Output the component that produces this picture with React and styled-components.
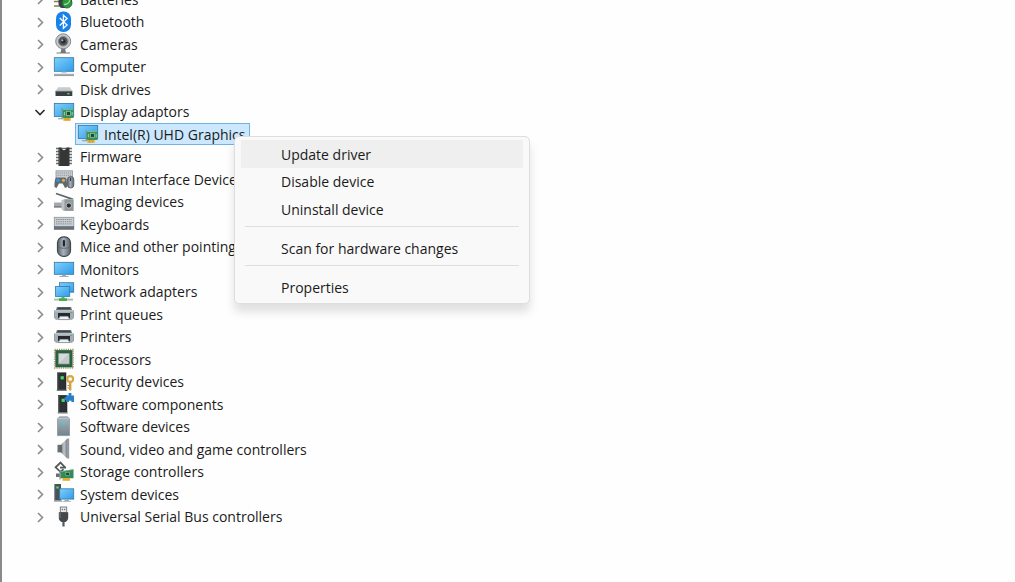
import React, { useState } from 'react';
import styled, { createGlobalStyle, css } from 'styled-components';

const GlobalStyle = createGlobalStyle`
  * {
    box-sizing: border-box;
  }
  body {
    margin: 0;
    background: #fefefe;
    color: #1b1b1b;
    font-family: 'Open Sans', 'Noto Sans', sans-serif;
    font-size: 14px;
  }
`;

const Window = styled.main`
  min-height: 100vh;
  overflow: hidden;
  border-left: 2px solid #8a8a8a;
`;

/* scrolled half a row down, so the first line is cut at the top */
const Tree = styled.ul`
  display: grid;
  grid-auto-rows: 22px 23px;
  margin: -12px 0 0;
  padding: 0 0 0 30px;
  list-style: none;
`;

const Row = styled.li`
  display: flex;
  align-items: center;
  justify-content: flex-start;
  position: relative;
  padding-left: ${({ $child }) => ($child ? '43px' : '0')};
`;

const Toggle = styled.button`
  display: flex;
  align-items: center;
  justify-content: center;
  width: 16px;
  height: 16px;
  margin-right: 5px;
  padding: 0;
  border: 0;
  background: none;
  color: ${({ $open }) => ($open ? '#2b2b2b' : '#8c8c8c')};
`;

const Item = styled.span`
  display: flex;
  align-items: center;
  gap: 5px;
  height: 100%;
  white-space: nowrap;
  ${({ $selected }) => $selected && css`
    padding: 0 4px 0 1px;
    border: 1px solid #70b4e4;
    background: #cce8ff;
  `}
`;

const Picture = styled.svg`
  display: block;
  flex: none;
  width: 22px;
  height: 22px;
`;

const Hidden = styled.svg`
  position: absolute;
  width: 0;
  height: 0;
`;

const Menu = styled.div`
  position: absolute;
  z-index: 1;
  top: 13px;
  left: 202px;
  width: 296px;
  padding: 3px 6px 2px;
  border: 1px solid #dedede;
  border-radius: 5px;
  background: #f9f9f9;
  box-shadow: 0 8px 10px rgba(0, 0, 0, 0.12);
`;

const MenuGroup = styled.div`
  display: grid;
  grid-auto-rows: 28px 27px;
`;

const MenuItem = styled.button`
  padding: 0 40px;
  border: 0;
  background: ${({ $active }) => ($active ? '#efefef' : 'transparent')};
  color: inherit;
  font: inherit;
  text-align: left;
`;

const Separator = styled.hr`
  height: 1px;
  margin: 3px 4px 7px;
  border: 0;
  background: #dfdfdf;
`;

const Defs = () => (
  <Hidden aria-hidden="true">
    <defs>
      <linearGradient id="screen" x1="0" y1="0" x2="1" y2="1">
        <stop offset="0" stopColor="#7fd0fb" />
        <stop offset="1" stopColor="#2e9be8" />
      </linearGradient>
      <linearGradient id="metal" x1="0" y1="0" x2="1" y2="0">
        <stop offset="0" stopColor="#6f757a" />
        <stop offset="0.5" stopColor="#c3c8cc" />
        <stop offset="1" stopColor="#7f868c" />
      </linearGradient>
      <linearGradient id="steel" x1="0" y1="0" x2="0" y2="1">
        <stop offset="0" stopColor="#a9b6bf" />
        <stop offset="1" stopColor="#74828c" />
      </linearGradient>
      <linearGradient id="mouse" x1="0" y1="0" x2="1" y2="0">
        <stop offset="0" stopColor="#59616b" />
        <stop offset="0.45" stopColor="#a9b1bb" />
        <stop offset="1" stopColor="#5c646e" />
      </linearGradient>
    </defs>
  </Hidden>
);

const Screen = ({
  x, y, w, h,
}) => (
  <rect x={x} y={y} width={w} height={h} fill="url(#screen)" stroke="#3277a8" strokeWidth="0.8" />
);

const Card = ({ x, y }) => (
  <g transform={`translate(${x} ${y})`}>
    <path d="M-1 -1v11" stroke="#7f9aa8" strokeWidth="1" />
    <rect x="-0.5" y="0" width="11" height="9" fill="#3c8f5b" />
    <path d="M0 0.6h10" stroke="#8ccb9e" strokeWidth="0.8" />
    <rect x="3.6" y="2.6" width="3.8" height="3.8" fill="#1d4a31" stroke="#93cfa4" strokeWidth="0.7" />
    <path d="M1.4 3v3.4M9.2 3v3.4" stroke="#a8d8ae" strokeWidth="0.9" />
    <rect x="0.3" y="9" width="7.4" height="2.8" fill="#e2b02d" />
    <path d="M2.6 9v2.8M5 9v2.8" stroke="#b98c22" strokeWidth="0.4" />
  </g>
);

const Tower = ({ x, y }) => (
  <g transform={`translate(${x} ${y})`}>
    <rect x="0.5" y="0" width="8.5" height="17" fill="#2d3135" stroke="#1b1e20" strokeWidth="0.5" />
    <path d="M0.8 0.3v16.4" stroke="#656b70" strokeWidth="0.8" />
    <rect x="3.6" y="3.4" width="3.2" height="3.2" fill="#46df5b" />
    <path d="M-0.3 17.6h10" stroke="#777d82" strokeWidth="1.2" />
  </g>
);

const printer = (
  <>
    <path d="M4 4h14l1.4 4H2.6z" fill="#6b757b" />
    <path d="M5 4.6h12l0.6 1.6H4.4z" fill="#3f484d" />
    <path d="M1.5 7.5h19v7.5l-1.5 1.3H3L1.5 15z" fill="#a4aeb5" stroke="#737e85" strokeWidth="0.6" />
    <path d="M1.5 7.8h19" stroke="#dde3e6" strokeWidth="0.9" />
    <rect x="17" y="8.8" width="2.2" height="1.2" fill="#45bd62" />
    <path d="M5 10h12v5H5z" fill="#23292d" />
    <path d="M6.8 13.2h8.4l1.3 3.4H5.5z" fill="#eef1f3" stroke="#5b656b" strokeWidth="0.5" />
  </>
);

const icons = {
  battery: (
    <>
      <path d="M1 13.5h5M1 18h5" stroke="#8a7c4d" strokeWidth="1.4" />
      <path d="M5.5 11h7v9h-3c-2.6 0-4-2-4-4.5z" fill="#3b4043" />
      <path d="M13 8h6v6h-6z" fill="#34393b" />
      <circle cx="14" cy="15" r="5" fill="#2d9742" stroke="#235c30" strokeWidth="0.8" />
      <path d="M11 16.5c3 0 5-1.5 6-4.5" fill="none" stroke="#95dc8c" strokeWidth="1.3" />
    </>
  ),
  bluetooth: (
    <>
      <rect x="3" y="0.5" width="15" height="20.5" rx="7.2" fill="#1682ea" />
      <path d="M6.7 7l7.4 7-3.7 3.3V4.2l3.7 3.3-7.4 7" fill="none" stroke="#fff" strokeWidth="1.3" />
    </>
  ),
  camera: (
    <>
      <path d="M3.5 20h13.5" stroke="#8b8f92" strokeWidth="1.2" />
      <path d="M8.5 15h3.5l1 5H7.500z" fill="#74787b" />
      <circle cx="10.2" cy="8.3" r="7.5" fill="#c5c7c9" stroke="#85898c" strokeWidth="1" />
      <circle cx="10.2" cy="8.3" r="4.8" fill="#4f5559" stroke="#8b8f92" strokeWidth="1" />
      <circle cx="10.2" cy="8.3" r="2.2" fill="#23292f" />
      <circle cx="9.3" cy="7.3" r="1.1" fill="#9fb9cb" />
    </>
  ),
  computer: (
    <>
      <Screen x={1.3} y={1.7} w={19.4} h={13.6} />
      <path d="M8.5 15.8h5v1.4h-5z" fill="#c3ccd2" />
      <path d="M1 18.8h20" stroke="#a2adb6" strokeWidth="2" />
      <path d="M1 19.6h20" stroke="#6f7b84" strokeWidth="0.5" />
    </>
  ),
  disk: (
    <>
      <path d="M5 9.3h12l2.3 4H2.5z" fill="#c8cacb" />
      <rect x="2.5" y="13" width="16.8" height="5" rx="0.5" fill="#3b3e40" />
      <path d="M2.5 13.3h16.8" stroke="#83878a" strokeWidth="0.8" />
      <rect x="14.3" y="15" width="2.2" height="1.4" fill="#4ddb5f" />
    </>
  ),
  display: (
    <>
      <Screen x={1.3} y={2.5} w={19.4} h={13} />
      <path d="M5 17.7h5" stroke="#9aa6ad" strokeWidth="1.2" />
      <Card x={10} y={8} />
    </>
  ),
  firmware: (
    <>
      <path d="M3 2.5h16M3 5.5h16M3 8.500h16M3 11.500h16M3 14.500h16M3 17.500h16" stroke="#6a6c6e" strokeWidth="1.7" />
      <path d="M5.500 1.5h3c0.300 1.8 1.200 2.700 2.500 2.700s2.200-0.900 2.500-2.700h3v18.500h-11z" fill="#343638" />
      <path d="M6.300 2.500v17" stroke="#5c5f61" strokeWidth="0.800" />
    </>
  ),
  hid: (
    <>
      <rect x="3" y="2.8" width="16.5" height="9" fill="#c9ced2" stroke="#8d959b" strokeWidth="0.8" />
      <path d="M4.5 5h13.5M4.5 7.3h13.5" stroke="#848c92" strokeWidth="0.9" strokeDasharray="1.2 0.9" />
      <path d="M3.6 9.5h8.4c1.5 0 2.2 4 2.2 9.500l-2.200 1-2.300-4.500H6L3.500 20l-2-1c0-5.500 0.500-9.500 2.100-9.500z" fill="#5d686f" />
      <circle cx="5" cy="12.3" r="1.8" fill="#3c91d2" />
      <circle cx="10.5" cy="12.3" r="1.6" fill="#e3ac43" />
      <rect x="14.5" y="8.5" width="6.3" height="11.5" rx="3" fill="url(#mouse)" stroke="#454c54" strokeWidth="0.7" />
      <path d="M17.6 9.5v3.5" stroke="#2e343a" strokeWidth="1" />
    </>
  ),
  imaging: (
    <>
      <path d="M3 2.5L20 8.3" stroke="#636769" strokeWidth="1.8" />
      <path d="M1 11.5h10v4.5H1z" fill="#a4a8ab" />
      <path d="M1 16h10" stroke="#686c6f" strokeWidth="1.2" />
      <path d="M8.5 9.3l3-1.3h9v12h-10l-2-2z" fill="#bfc3c5" />
      <path d="M11.5 8.5h9v11.3h-9z" fill="#92979a" />
      <circle cx="15.8" cy="14.5" r="2.6" fill="#282d30" stroke="#d6d9da" strokeWidth="0.8" />
      <rect x="18" y="10" width="1.4" height="1.2" fill="#60d16a" />
    </>
  ),
  keyboard: (
    <>
      <rect x="1.3" y="4.3" width="19.5" height="12" fill="#cbd0d4" stroke="#8b9196" strokeWidth="0.8" />
      <path d="M3 6.5h16M3 8.7h16M3 10.9h16" stroke="#858c92" strokeWidth="1" strokeDasharray="1.4 0.8" />
      <rect x="1" y="13.2" width="20" height="3.3" fill="#686f75" />
    </>
  ),
  mouse: (
    <>
      <rect x="4.5" y="0.8" width="13" height="19.6" rx="6" fill="url(#mouse)" stroke="#40474f" strokeWidth="1.2" />
      <path d="M5 11c2 1.7 10 1.7 12 0" fill="none" stroke="#59616a" strokeWidth="0.8" />
      <rect x="9.8" y="4" width="2.2" height="6.6" rx="1" fill="#20262d" />
    </>
  ),
  monitor: (
    <>
      <Screen x={1.3} y={4.3} w={19.4} h={12} />
      <path d="M9 16.7h4v1.3h2.5v0.9h-9V18H9z" fill="#9eacb6" />
    </>
  ),
  network: (
    <>
      <Screen x={6.5} y={1.7} w={14.2} h={9.5} />
      <Screen x={2.5} y={5.6} w={14.2} h={9.8} />
      <path d="M8.5 15.8h3v2h-3z" fill="#55b968" />
      <path d="M1 18.6h19" stroke="#a7c5ac" strokeWidth="2" />
      <path d="M6 18.6h8" stroke="#39ad4e" strokeWidth="2.6" />
    </>
  ),
  printer,
  processor: (
    <>
      <rect x="1.6" y="1.4" width="18.6" height="18.6" fill="none" stroke="#a79a56" strokeWidth="1.4" strokeDasharray="1.2 1" />
      <rect x="2.3" y="2.1" width="17.2" height="17.2" fill="#2b6044" />
      <rect x="5.7" y="5.5" width="10.4" height="10.4" fill="#d4dbd8" stroke="#9ba9a2" strokeWidth="0.8" />
      <path d="M6.5 15l8.5-8.5v8.5z" fill="#c2cbc7" />
    </>
  ),
  security: (
    <>
      <Tower x={4} y={1.8} />
      <path d="M16 10.5h2.4v8.3l-1.2 1.2-1.2-1.2z" fill="#d3a13f" />
      <path d="M16 14.5h-1.5M16 17h-1.5" stroke="#b98629" strokeWidth="1.2" />
      <circle cx="17.2" cy="8" r="2.9" fill="none" stroke="#daa63f" strokeWidth="2.1" />
    </>
  ),
  component: (
    <>
      <Tower x={5} y={2.3} />
      <path d="M13 2.5h2.600V0h2.800v2.500H21v6.500h-2.600V7.800h-2.400v1.200H13V7h-1.500V4.300H13z" fill="#2b7fc9" />
    </>
  ),
  software: (
    <>
      <path d="M6.5 0.8h8l2 1.8v17h-12v-17z" fill="url(#steel)" stroke="#77848d" strokeWidth="0.6" />
      <path d="M4.5 2.6h12" stroke="#c2ccd3" strokeWidth="0.8" />
      <rect x="9.2" y="6" width="2.8" height="2.6" fill="#3fd2cd" />
    </>
  ),
  sound: (
    <>
      <path d="M4.5 6.8h4v7.6h-4z" fill="#686d71" />
      <path d="M8 6.8L14 0.8v19.4L8 14.4z" fill="url(#metal)" />
      <path d="M14 0.5h2.2v20H14z" fill="#969b9f" />
      <path d="M8 7v7.2" stroke="#4e5357" strokeWidth="0.8" />
    </>
  ),
  storage: (
    <>
      <path d="M12 6.300L7.500 1.600 2.600 6.300l4.900 4.600 3-2.600" fill="none" stroke="#55595b" strokeWidth="1.8" />
      <path d="M7 6.6h6" stroke="#55595b" strokeWidth="1.8" />
      <path d="M3 12.500h4v3.500H3z" fill="#6a6f71" />
      <path d="M7 9.500v9" stroke="#8b9194" strokeWidth="1.2" />
      <path d="M7.500 10.500l13-2.300v9h-13z" fill="#37885a" />
      <path d="M7.500 10.800l13-2.300" stroke="#7dbd90" strokeWidth="0.8" />
      <rect x="12.800" y="11.500" width="3.600" height="3" fill="#1d4a31" stroke="#8bc99d" strokeWidth="0.6" />
      <path d="M9.500 17h7.500v2.800H9.500z" fill="#e0af2e" />
    </>
  ),
  system: (
    <>
      <rect x="1.5" y="1" width="6.5" height="16.5" fill="#4a5257" />
      <path d="M1.8 1v16.5" stroke="#767d82" strokeWidth="0.7" />
      <rect x="3.2" y="3.5" width="2.6" height="2" fill="#4fdc62" />
      <path d="M1 18h8" stroke="#878e93" strokeWidth="1.2" />
      <Screen x={6.7} y={5.8} w={14} h={10.3} />
      <path d="M11.5 16.6h4.5v1.3h2v0.8H9.5v-0.8h2z" fill="#9daab3" />
    </>
  ),
  usb: (
    <>
      <rect x="7.3" y="1" width="6.4" height="5.5" fill="#e4e6e7" stroke="#737679" strokeWidth="0.9" />
      <path d="M9.3 2.8v1.4M11.7 2.8v1.4" stroke="#4b4e50" strokeWidth="0.9" />
      <path d="M5.8 6.3h9.4v5.7c0 2-1.5 3-2.7 4H8.5c-1.2-1-2.7-2-2.7-4z" fill="#45484a" />
      <path d="M7 7v5" stroke="#83878a" strokeWidth="0.9" />
      <path d="M10.5 15.5v5" stroke="#55585a" strokeWidth="2.2" />
    </>
  ),
};

const devices = [
  { name: 'Batteries', icon: 'battery' },
  { name: 'Bluetooth', icon: 'bluetooth' },
  { name: 'Cameras', icon: 'camera' },
  { name: 'Computer', icon: 'computer' },
  { name: 'Disk drives', icon: 'disk' },
  { name: 'Display adaptors', icon: 'display', children: ['Intel(R) UHD Graphics'] },
  { name: 'Firmware', icon: 'firmware' },
  { name: 'Human Interface Devices', icon: 'hid' },
  { name: 'Imaging devices', icon: 'imaging' },
  { name: 'Keyboards', icon: 'keyboard' },
  { name: 'Mice and other pointing devices', icon: 'mouse' },
  { name: 'Monitors', icon: 'monitor' },
  { name: 'Network adapters', icon: 'network' },
  { name: 'Print queues', icon: 'printer' },
  { name: 'Printers', icon: 'printer' },
  { name: 'Processors', icon: 'processor' },
  { name: 'Security devices', icon: 'security' },
  { name: 'Software components', icon: 'component' },
  { name: 'Software devices', icon: 'software' },
  { name: 'Sound, video and game controllers', icon: 'sound' },
  { name: 'Storage controllers', icon: 'storage' },
  { name: 'System devices', icon: 'system' },
  { name: 'Universal Serial Bus controllers', icon: 'usb' },
];

const menuGroups = [
  ['Update driver', 'Disable device', 'Uninstall device'],
  ['Scan for hardware changes'],
  ['Properties'],
];

const Icon = ({ name }) => (
  <Picture viewBox="0 0 22 22" aria-hidden="true">{icons[name]}</Picture>
);

const Chevron = ({ open }) => (
  <svg width="12" height="12" viewBox="0 0 12 12" fill="none" stroke="currentColor" strokeWidth="1.6" aria-hidden="true">
    <path d={open ? 'M1.5 4L6 8.5 10.5 4' : 'M4 2L8.5 6.5 4 11'} />
  </svg>
);

const ContextMenu = () => {
  const [active, setActive] = useState('Update driver');

  return (
    <Menu role="menu">
      {menuGroups.map((group, index) => (
        <React.Fragment key={group[0]}>
          {index > 0 && <Separator />}
          <MenuGroup>
            {group.map((label) => (
              <MenuItem
                key={label}
                type="button"
                role="menuitem"
                $active={label === active}
                onMouseEnter={() => setActive(label)}
              >
                {label}
              </MenuItem>
            ))}
          </MenuGroup>
        </React.Fragment>
      ))}
    </Menu>
  );
};

const App = () => {
  const [open, setOpen] = useState({ 'Display adaptors': true });

  const toggle = (name) => setOpen({ ...open, [name]: !open[name] });

  return (
    <Window>
      <GlobalStyle />
      <Defs />
      <Tree>
        {devices.map(({ name, icon, children = [] }) => (
          <React.Fragment key={name}>
            <Row>
              <Toggle type="button" aria-label={name} aria-expanded={!!open[name]} $open={open[name]} onClick={() => toggle(name)}>
                <Chevron open={open[name]} />
              </Toggle>
              <Item>
                <Icon name={icon} />
                {name}
              </Item>
            </Row>
            {open[name] && children.map((child) => (
              <Row key={child} $child>
                <Item $selected>
                  <Icon name={icon} />
                  {child}
                </Item>
                <ContextMenu />
              </Row>
            ))}
          </React.Fragment>
        ))}
      </Tree>
    </Window>
  );
};

export default App;
